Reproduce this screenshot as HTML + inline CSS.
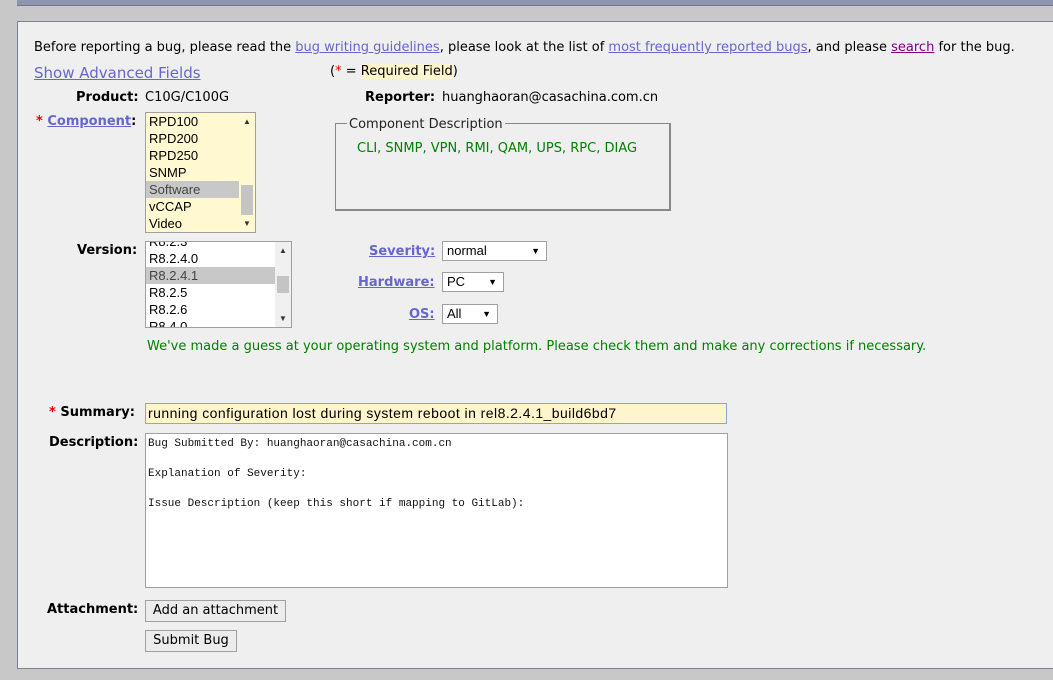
<!DOCTYPE html>
<html><head><meta charset="utf-8"><style>
body{margin:0;width:1053px;height:680px;background:#c8c8c8;position:relative;overflow:hidden;font-family:"DejaVu Sans",Verdana,sans-serif;font-size:13px;color:#000}
.a{position:absolute;white-space:nowrap;margin-top:2px}
a{color:#6666cc;text-decoration:underline}
.b{font-weight:bold}
.r{color:#e00}
.lb{position:absolute;border:1px solid #a0a0a0;background:#fff;overflow:hidden;font-family:"Liberation Sans",Arial,sans-serif;font-size:13px}
.it{height:17px;line-height:17px;padding-left:3px;margin-right:16px}
.sb{position:absolute;right:0;top:0;bottom:0;width:16px;background:#f0f0f0}
.ar{position:absolute;left:4px;font-size:8px;line-height:8px;color:#333}
.th{position:absolute;left:2px;width:12px;background:#c4c4c4}
.sel{position:absolute;border:1px solid #a0a0a0;background:#fff;font-family:"Liberation Sans",Arial,sans-serif;font-size:13px;line-height:18px;padding-left:4px;box-sizing:border-box}
.sel span{position:absolute;right:6px;top:0;font-size:9px}
.btn{position:absolute;border:1px solid #a0a0a0;background:#ececec;box-sizing:border-box;text-align:center;line-height:20px}
</style></head><body>
<div style="position:absolute;left:17px;top:0;width:1040px;height:5px;background:#8f97b0;border-bottom:1px solid #707890"></div>
<div style="position:absolute;left:17px;top:21px;width:1040px;height:646px;background:#efefef;border:1px solid #7b8294"></div>

<div class="a" style="left:34px;top:38px">Before reporting a bug, please read the <a>bug writing guidelines</a>, please look at the list of <a>most frequently reported bugs</a>, and please <a style="color:#800080">search</a> for the bug.</div>
<div class="a" style="left:34px;top:62px;font-size:15px"><a>Show Advanced Fields</a></div>
<div class="a" style="left:330px;top:62px">(<span class="r">*</span> = <span style="background:#fff5cc">Required Field</span>)</div>

<div class="a b" style="left:76px;top:88px">Product:</div>
<div class="a" style="left:145px;top:88px">C10G/C100G</div>
<div class="a b" style="left:365px;top:88px">Reporter:</div>
<div class="a" style="left:442px;top:88px">huanghaoran@casachina.com.cn</div>

<div class="a b" style="left:36px;top:112px"><span class="r">*</span> <a>Component</a>:</div>
<div class="lb" style="left:145px;top:112px;width:109px;height:119px;background:#fff8d0">
<div class="it">RPD100</div><div class="it">RPD200</div><div class="it">RPD250</div><div class="it">SNMP</div><div class="it" style="background:#c8c8c8;color:#444">Software</div><div class="it">vCCAP</div><div class="it">Video</div>
<div class="sb" style="background:#fff8d0"><div class="ar" style="top:5px">▲</div><div class="th" style="top:72px;height:30px"></div><div class="ar" style="bottom:4px">▼</div></div>
</div>

<div style="position:absolute;left:335px;top:123px;width:333px;height:85px;border:1px solid #888;border-width:1px 2px 2px 1px"></div>
<div class="a" style="left:347px;top:115px;background:#efefef;padding:0 2px;color:#222">Component Description</div>
<div class="a" style="left:357px;top:139px;color:#008000">CLI, SNMP, VPN, RMI, QAM, UPS, RPC, DIAG</div>

<div class="a b" style="left:77px;top:241px">Version:</div>
<div class="lb" style="left:145px;top:241px;width:145px;height:85px">
<div class="it" style="margin-top:-9px">R8.2.3</div><div class="it">R8.2.4.0</div><div class="it" style="background:#c8c8c8;color:#444">R8.2.4.1</div><div class="it">R8.2.5</div><div class="it">R8.2.6</div><div class="it">R8.4.0</div>
<div class="sb"><div class="ar" style="top:5px">▲</div><div class="th" style="top:34px;height:17px"></div><div class="ar" style="bottom:4px">▼</div></div>
</div>

<div class="a b" style="left:369px;top:242px"><a>Severity:</a></div>
<div class="sel" style="left:442px;top:241px;width:105px;height:20px">normal<span>▼</span></div>
<div class="a b" style="left:358px;top:273px"><a>Hardware:</a></div>
<div class="sel" style="left:442px;top:272px;width:62px;height:20px">PC<span>▼</span></div>
<div class="a b" style="left:409px;top:305px"><a>OS:</a></div>
<div class="sel" style="left:442px;top:304px;width:56px;height:20px">All<span>▼</span></div>

<div class="a" style="left:147px;top:337px;color:#008000">We've made a guess at your operating system and platform. Please check them and make any corrections if necessary.</div>

<div class="a b" style="left:49px;top:403px"><span class="r">*</span> Summary:</div>
<div style="position:absolute;left:145px;top:403px;width:582px;height:21px;box-sizing:border-box;border:1px solid #8aa6d8;background:#fff5cc;font-family:'Liberation Sans',Arial,sans-serif;font-size:14px;letter-spacing:0.45px;line-height:19px;padding-left:2px;white-space:nowrap">running configuration lost during system reboot in rel8.2.4.1_build6bd7</div>

<div class="a b" style="left:49px;top:433px">Description:</div>
<div style="position:absolute;left:145px;top:433px;width:583px;height:155px;box-sizing:border-box;border:1px solid #a0a0a0;background:#fff;font-family:'Liberation Mono',monospace;font-size:11px;line-height:15px;padding:3px 2px;white-space:pre;color:#111">Bug Submitted By: huanghaoran@casachina.com.cn

Explanation of Severity:

Issue Description (keep this short if mapping to GitLab):</div>

<div class="a b" style="left:47px;top:600px">Attachment:</div>
<div class="btn" style="left:145px;top:600px;width:141px;height:22px">Add an attachment</div>
<div class="btn" style="left:145px;top:630px;width:92px;height:22px">Submit Bug</div>
</body></html>
